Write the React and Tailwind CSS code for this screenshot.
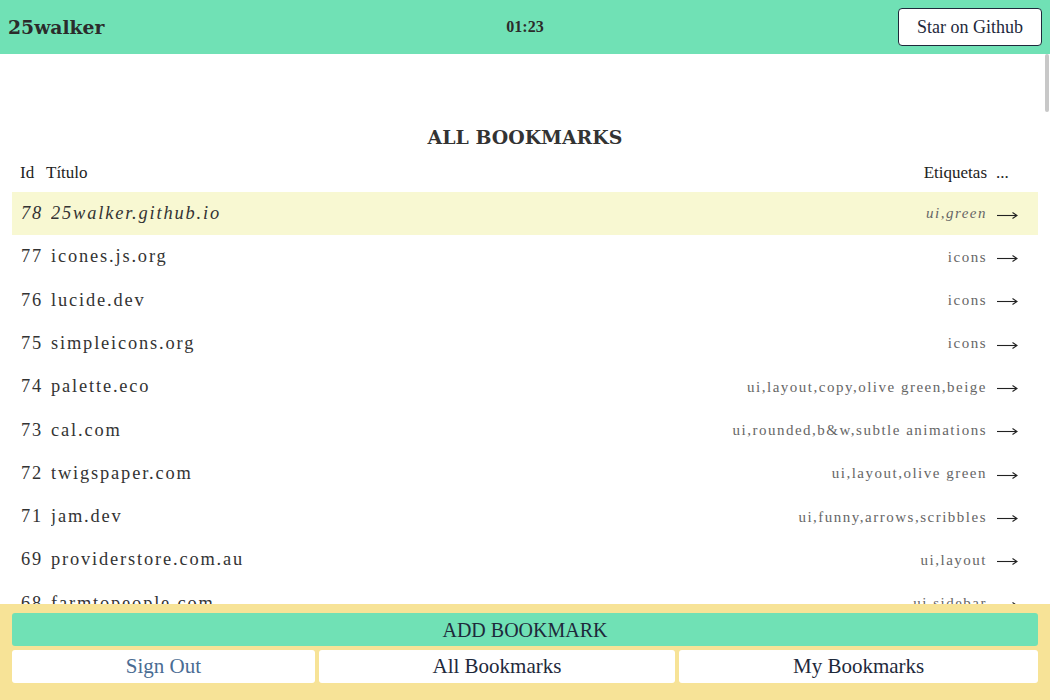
import React from 'react';

const bookmarks = [
  { id: 78, title: '25walker.github.io', tags: 'ui,green', current: true },
  { id: 77, title: 'icones.js.org', tags: 'icons' },
  { id: 76, title: 'lucide.dev', tags: 'icons' },
  { id: 75, title: 'simpleicons.org', tags: 'icons' },
  { id: 74, title: 'palette.eco', tags: 'ui,layout,copy,olive green,beige' },
  { id: 73, title: 'cal.com', tags: 'ui,rounded,b&w,subtle animations' },
  { id: 72, title: 'twigspaper.com', tags: 'ui,layout,olive green' },
  { id: 71, title: 'jam.dev', tags: 'ui,funny,arrows,scribbles' },
  { id: 69, title: 'providerstore.com.au', tags: 'ui,layout' },
  { id: 68, title: 'farmtopeople.com', tags: 'ui,sidebar' },
  { id: 67, title: 'linear.app', tags: 'ui,dark,gradients' },
  { id: 66, title: 'vercel.com', tags: 'ui,b&w' },
  { id: 65, title: 'raycast.com', tags: 'ui,dark' },
  { id: 64, title: 'tailwindcss.com', tags: 'css,docs' },
  { id: 63, title: 'radix-ui.com', tags: 'components' },
  { id: 62, title: 'fontshare.com', tags: 'fonts' },
  { id: 61, title: 'coolors.co', tags: 'colors' },
  { id: 60, title: 'heroicons.com', tags: 'icons' },
  { id: 59, title: 'uiverse.io', tags: 'ui,components' },
  { id: 58, title: 'godly.website', tags: 'ui,inspiration' },
];

// thin "go to" arrow
const Arrow = () => (
  <svg width="21" height="10" viewBox="0 0 21 10" className="block">
    <path d="M0 5.5H19.5" stroke="#222" strokeWidth="1.1" />
    <path d="M15.5 2.5L20 5.5L15.5 8.5" fill="none" stroke="#222" strokeWidth="1.1" />
  </svg>
);

const BookmarkRow = ({ item }) => {
  // current bookmark is highlighted + italic
  const rowCls = item.current ? 'bg-[#f8f8d2] italic' : '';
  return (
    <div className={`flex items-center h-[43.33px] pl-[9px] pr-5 ${rowCls}`}>
      <span className="w-[30px] shrink-0 text-[18.4px] tracking-widest text-[#333]">{item.id}</span>
      <span className="flex-1 truncate text-[18.4px] tracking-widest text-[#333]">{item.title}</span>
      <span className="text-[15px] tracking-widest text-[#666]">{item.tags}</span>
      <span className="w-[22px] ml-[9px] shrink-0 flex items-center justify-end pt-[2px]">
        <Arrow />
      </span>
    </div>
  );
};

const App = () => {
  return (
    <div className="h-screen flex flex-col bg-white font-['Liberation_Serif',serif] text-[#2b2b2b]">
      {/* Top bar */}
      <header className="h-[54px] shrink-0 flex items-center justify-between px-2 bg-[#70e1b5]">
        <h1 className="w-[200px] font-['DejaVu_Serif',serif] text-[18.8px] font-bold text-[#2b2b2b]">25walker</h1>
        <span className="text-[16px] font-bold text-[#2b2b2b]">01:23</span>
        <div className="w-[200px] flex justify-end">
          <button className="h-[38px] px-[18px] bg-white border border-[#1e293b] rounded-[4px] text-[18px] text-[#1e293b]">
            Star on Github
          </button>
        </div>
      </header>

      {/* List */}
      <div className="relative flex-1 min-h-0">
        <main className="h-full overflow-y-auto px-3 pt-[69px]">
          <h2 className="h-[28px] leading-[28px] text-center font-['DejaVu_Serif',serif] text-[18.9px] font-bold uppercase text-[#333]">
            All Bookmarks
          </h2>
          <div className="mt-[8px] h-[28px] flex items-center pl-2 pr-5 text-[17px] text-[#222]">
            <span className="w-[26px]">Id</span>
            <span className="flex-1">Título</span>
            <span>Etiquetas</span>
            <span className="w-[22px] ml-[9px]">...</span>
          </div>
          <div className="mt-[5px] pb-4">
            {bookmarks.map((b) => (
              <BookmarkRow key={b.id} item={b} />
            ))}
          </div>
        </main>
        {/* overlay scroll thumb */}
        <div className="absolute right-[1px] top-0 w-[4px] h-[58px] rounded-full bg-[#c8c8c8]"></div>
      </div>

      {/* Bottom actions */}
      <footer className="shrink-0 bg-[#f7e397] px-3 pt-[9px] pb-[17px] flex flex-col gap-1">
        <button className="h-[33px] w-full rounded-[3px] bg-[#70e1b5] text-[20px] text-[#1e293b]">ADD BOOKMARK</button>
        <div className="flex gap-1">
          <button className="grow h-[33px] rounded-[3px] bg-white text-[21px] text-[#4a6c93]">Sign Out</button>
          <button className="grow h-[33px] rounded-[3px] bg-white text-[21px] text-[#1e293b]">All Bookmarks</button>
          <button className="grow h-[33px] rounded-[3px] bg-white text-[21px] text-[#1e293b]">My Bookmarks</button>
        </div>
      </footer>
    </div>
  );
};

export default App;
